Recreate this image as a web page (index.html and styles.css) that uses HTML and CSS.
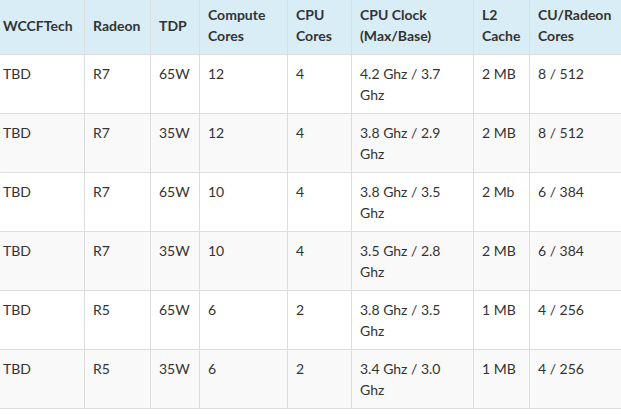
FILE: index.html
```html
<!DOCTYPE html>
<html>
<head>
<meta charset="utf-8">
<link rel="stylesheet" href="styles.css">
</head>
<body>
<table class="spec">
  <colgroup>
    <col class="c1"><col class="c2"><col class="c3"><col class="c4"><col class="c5"><col class="c6"><col class="c7"><col class="c8">
  </colgroup>
  <thead>
    <tr>
      <th>WCCFTech</th><th>Radeon</th><th>TDP</th><th>Compute Cores</th><th>CPU Cores</th><th>CPU Clock (Max/Base)</th><th>L2 Cache</th><th>CU/Radeon Cores</th>
    </tr>
  </thead>
  <tbody>
    <tr><td>TBD</td><td>R7</td><td>65W</td><td>12</td><td>4</td><td>4.2 Ghz / 3.7 Ghz</td><td>2 MB</td><td>8 / 512</td></tr>
    <tr><td>TBD</td><td>R7</td><td>35W</td><td>12</td><td>4</td><td>3.8 Ghz / 2.9 Ghz</td><td>2 MB</td><td>8 / 512</td></tr>
    <tr><td>TBD</td><td>R7</td><td>65W</td><td>10</td><td>4</td><td>3.8 Ghz / 3.5 Ghz</td><td>2 Mb</td><td>6 / 384</td></tr>
    <tr><td>TBD</td><td>R7</td><td>35W</td><td>10</td><td>4</td><td>3.5 Ghz / 2.8 Ghz</td><td>2 MB</td><td>6 / 384</td></tr>
    <tr><td>TBD</td><td>R5</td><td>65W</td><td>6</td><td>2</td><td>3.8 Ghz / 3.5 Ghz</td><td>1 MB</td><td>4 / 256</td></tr>
    <tr><td>TBD</td><td>R5</td><td>35W</td><td>6</td><td>2</td><td>3.4 Ghz / 3.0 Ghz</td><td>1 MB</td><td>4 / 256</td></tr>
  </tbody>
</table>
</body>
</html>
```
FILE: styles.css
```css
html, body {
  margin: 0;
  padding: 0;
  background: #fff;
}
body {
  font-family: Lato, "Open Sans", sans-serif;
  font-size: 14px;
  color: #333;
  overflow: hidden;
}
.spec {
  border-collapse: collapse;
  table-layout: fixed;
  width: 633px;
  margin: -5px 0 0 -6px;
}
.c1 { width: 90px; }
.c2 { width: 66px; }
.c3 { width: 49px; }
.c4 { width: 88px; }
.c5 { width: 64px; }
.c6 { width: 122px; }
.c7 { width: 56px; }
.c8 { width: 98px; }
.spec th, .spec td {
  border: 1px solid #ddd;
  padding: 8px 8px;
  line-height: 21px;
  text-align: left;
}
.spec th {
  background: #d9edf7;
  font-weight: bold;
  vertical-align: middle;
}
.spec td {
  vertical-align: top;
}
.spec tbody tr:nth-child(even) td {
  background: #f9f9f9;
}
```
